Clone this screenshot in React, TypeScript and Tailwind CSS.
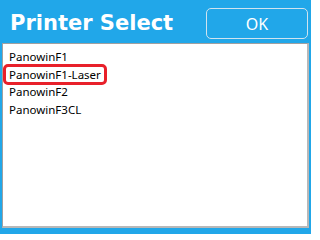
import React from 'react';

const printers = ['PanowinF1', 'PanowinF1-Laser', 'PanowinF2', 'PanowinF3CL'];

const App: React.FC = () => {
  const selected = 1;
  return (
    <div
      className="w-[311px] h-[234px] bg-[#21a7e9] flex flex-col overflow-hidden"
      style={{ fontFamily: '"Noto Sans", "Open Sans", sans-serif' }}
    >
      <div className="h-[43px] flex items-center justify-between pl-[10px] pr-[3px]">
        <h1
          className="text-white font-bold text-[21px] leading-none mt-[4px]"
          style={{ fontFamily: '"DejaVu Sans", Verdana, sans-serif' }}
        >
          Printer Select
        </h1>
        <button className="w-[102px] h-[31px] mt-[4px] border border-[#cfe3ef] rounded-[5px] text-white text-[16px] leading-none">
          OK
        </button>
      </div>
      <div className="mx-[2px] h-[185px] bg-white border-t border-l border-[#a0a0a0] border-r-2 border-b-2 border-r-[#b8b8b8] border-b-[#b8b8b8]">
        <ul className="pt-[4px]">
          {printers.map((p, i) => (
            <li key={p} className="h-[17.5px] flex items-center pl-[6px]">
              <span
                className={
                  i === selected
                    ? 'text-[11.5px] leading-none text-black border-[3px] border-[#e8202a] rounded-[5px] px-[3px] py-[2px] -ml-[6px]'
                    : 'text-[11.5px] leading-none text-black'
                }
              >
                {p}
              </span>
            </li>
          ))}
        </ul>
      </div>
    </div>
  );
};

export default App;
